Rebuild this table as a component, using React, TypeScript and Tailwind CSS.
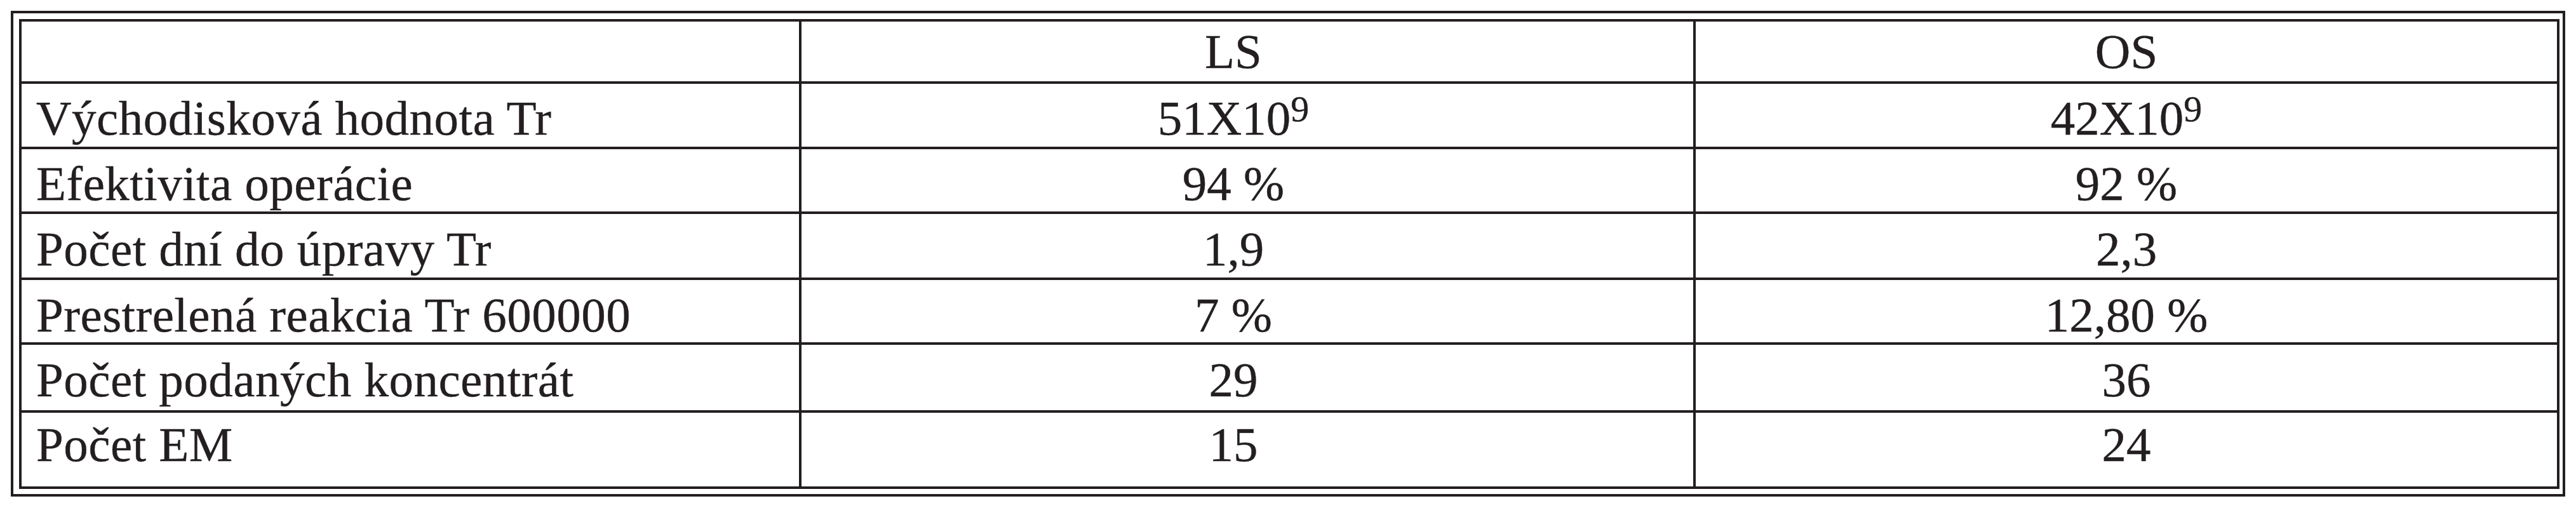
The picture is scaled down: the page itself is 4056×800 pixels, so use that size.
import React from "react";

type Row = {
  label: string;
  ls: React.ReactNode;
  os: React.ReactNode;
  h: string;
  pt: string;
};

const Pow = ({ base }: { base: string }) => (
  <>
    {base}X10
    <span className="relative -top-[21px] text-[58px]">9</span>
  </>
);

const rows: Row[] = [
  { label: "", ls: "LS", os: "OS", h: "h-[94px]", pt: "pt-[9px]" },
  { label: "Východisková hodnota Tr", ls: <Pow base="51" />, os: <Pow base="42" />, h: "h-[99px]", pt: "pt-[16px]" },
  { label: "Efektivita operácie", ls: "94 %", os: "92 %", h: "h-[98px]", pt: "pt-[16px]" },
  { label: "Počet dní do úpravy Tr", ls: "1,9", os: "2,3", h: "h-[100px]", pt: "pt-[17px]" },
  { label: "Prestrelená reakcia Tr 600000", ls: "7 %", os: "12,80 %", h: "h-[98px]", pt: "pt-[17px]" },
  { label: "Počet podaných koncentrát", ls: "29", os: "36", h: "h-[103px]", pt: "pt-[17px]" },
  { label: "Počet EM", ls: "15", os: "24", h: "h-[116px]", pt: "pt-[12px]" },
];

export default function App() {
  return (
    <div className="w-[4056px] h-[800px] bg-white p-[17px] font-['Liberation_Serif','Times_New_Roman',serif] text-[#231f20]">
      {/* outer frame of the double border */}
      <div className="w-[4022px] h-[765px] border-[4px] border-[#231f20] pt-[9px] pl-[9px]">
        <div className="grid w-[4000px] grid-cols-[1224px_1404px_1356px] gap-[4px] bg-[#231f20] p-[4px] text-[77px] leading-[77px] [-webkit-text-stroke:0.4px_#231f20]">
          {rows.map((r, i) => (
            <React.Fragment key={i}>
              <div className={`bg-white pl-[23px] whitespace-nowrap tracking-[0.5px] ${r.h} ${r.pt}`}>{r.label}</div>
              <div className={`bg-white text-center whitespace-nowrap pr-[44px] ${r.h} ${r.pt}`}>{r.ls}</div>
              <div className={`bg-white text-center whitespace-nowrap ${r.h} ${r.pt}`}>{r.os}</div>
            </React.Fragment>
          ))}
        </div>
      </div>
    </div>
  );
}
